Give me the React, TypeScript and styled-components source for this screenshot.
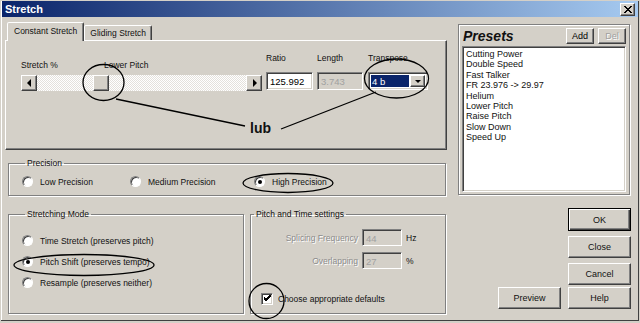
import React from 'react';
import styled, { createGlobalStyle, css } from 'styled-components';

const GlobalStyle = createGlobalStyle`
  html, body {
    margin: 0;
    padding: 0;
    background: #d4d0c8;
  }
  * {
    box-sizing: border-box;
  }
`;

const raised = css`
  border: 1px solid;
  border-color: #fff #404040 #404040 #fff;
  box-shadow: inset -1px -1px #808080, inset 1px 1px #d4d0c8;
  background: #d4d0c8;
`;

const sunken = css`
  border: 1px solid;
  border-color: #808080 #fff #fff #808080;
  box-shadow: inset 1px 1px #404040, inset -1px -1px #d4d0c8;
`;

const etched = css`
  border: 1px solid #808080;
  box-shadow: inset 1px 1px #fff, 1px 1px #fff;
`;

const Window = styled.div`
  position: relative;
  width: 640px;
  height: 322px;
  background: #d4d0c8;
  border: 1px solid #d4d0c8;
  box-shadow: inset -1px -1px #404040, inset 1px 1px #fff;
  font-family: 'Liberation Sans', Arial, sans-serif;
  font-size: 8.5px;
  color: #111;
  overflow: hidden;
`;

const TitleBar = styled.div`
  height: 16px;
  margin: 0 1px;
  padding: 0 3px 0 3px;
  display: flex;
  align-items: center;
  justify-content: space-between;
  background: linear-gradient(to right, #0a246a, #a6caf0);
  color: #fff;
  font-weight: bold;
  font-size: 11px;
`;

const CloseButton = styled.div`
  ${raised};
  width: 15px;
  height: 13px;
  display: flex;
  align-items: center;
  justify-content: center;
`;

const Body = styled.div`
  display: flex;
  gap: 11px;
  padding: 5px 0 0 4px;
`;

const LeftColumn = styled.div`
  width: 442px;
  display: flex;
  flex-direction: column;
`;

const TabStrip = styled.div`
  display: flex;
  align-items: flex-end;
  height: 18px;
  padding-left: 2px;
`;

const Tab = styled.div<{ $active?: boolean }>`
  position: relative;
  z-index: ${p => (p.$active ? 2 : 1)};
  height: ${p => (p.$active ? '19px' : '15px')};
  margin-bottom: ${p => (p.$active ? '-1px' : '0')};
  padding: ${p => (p.$active ? '3px 6px 0' : '2px 5px 0')};
  border: 1px solid;
  border-bottom: none;
  border-color: #fff #404040 transparent #fff;
  border-radius: 2px 2px 0 0;
  box-shadow: inset -1px 0 #808080;
  background: #d4d0c8;
  white-space: nowrap;
`;

const TabPanel = styled.div`
  position: relative;
  height: 110px;
  border: 1px solid;
  border-color: #fff #404040 #404040 #fff;
  box-shadow: inset -1px -1px #808080;
  padding: 12px 0 0 15px;
`;

const ControlsRow = styled.div`
  display: flex;
  align-items: flex-end;
`;

const ScrollColumn = styled.div`
  width: 241px;
  display: flex;
  flex-direction: column;
  margin-bottom: -1px;
`;

const ScrollLabels = styled.div`
  display: grid;
  grid-template-columns: 83px auto;
`;

const Scrollbar = styled.div`
  margin-top: 5px;
  height: 16px;
  display: flex;
`;

const ArrowButton = styled.div<{ $dir: 'left' | 'right' }>`
  ${raised};
  width: 16px;
  height: 16px;
  display: flex;
  align-items: center;
  justify-content: center;
  &::after {
    content: '';
    border-top: 4px solid transparent;
    border-bottom: 4px solid transparent;
    ${p =>
      p.$dir === 'left'
        ? 'border-right: 4px solid #000; margin-left: -1px;'
        : 'border-left: 4px solid #000; margin-left: 1px;'}
  }
`;

const Track = styled.div`
  flex: 1;
  background: repeating-conic-gradient(#fff 0 25%, #e4e1dc 0 50%) 0 0 / 2px 2px;
  display: flex;
`;

const Thumb = styled.div<{ $offset: number }>`
  ${raised};
  width: 16px;
  height: 16px;
  margin-left: ${p => p.$offset}px;
`;

const FieldColumn = styled.div<{ $gap: number }>`
  display: flex;
  flex-direction: column;
  margin-left: ${p => p.$gap}px;
  gap: 9px;
`;

const TextBox = styled.div<{ $width: number; $height?: number; $disabled?: boolean }>`
  ${sunken};
  width: ${p => p.$width}px;
  height: ${p => p.$height ?? 18}px;
  padding: 3px 0 0 3px;
  background: ${p => (p.$disabled ? '#d4d0c8' : '#fff')};
  color: ${p => (p.$disabled ? '#a0a0a0' : '#000')};
  font-size: 9.5px;
`;

const Combo = styled.div`
  ${sunken};
  width: 60px;
  height: 18px;
  background: #fff;
  display: flex;
  padding: 2px;
  gap: 1px;
`;

const ComboValue = styled.div`
  flex: 1;
  background: #0a246a;
  color: #fff;
  font-size: 9.5px;
  padding: 1px 0 0 1px;
`;

const ComboButton = styled.div`
  ${raised};
  width: 15px;
  display: flex;
  align-items: center;
  justify-content: center;
  &::after {
    content: '';
    border-left: 3px solid transparent;
    border-right: 3px solid transparent;
    border-top: 3px solid #000;
  }
`;

const Callout = styled.span`
  position: absolute;
  left: 244px;
  top: 79px;
  font-size: 14px;
  font-weight: bold;
`;

const Group = styled.fieldset<{ $width: number; $height: number }>`
  ${etched};
  margin: 0;
  width: ${p => p.$width}px;
  height: ${p => p.$height}px;
  padding: 0;
  min-width: 0;
`;

const Legend = styled.legend`
  padding: 0 2px;
  margin-left: 3px;
  line-height: 10px;
`;

const PrecisionGroup = styled(Group)`
  margin: 8px 0 0 3px;
  padding: 8px 0 0 13px;
`;

const RadioRow = styled.div`
  display: grid;
  grid-template-columns: 108px 124px auto;
`;

const OptionLabel = styled.label`
  display: flex;
  align-items: center;
  gap: 7px;
  height: 11px;
  white-space: nowrap;
`;

const RadioDot = styled.span<{ $checked?: boolean }>`
  position: relative;
  width: 11px;
  height: 11px;
  border-radius: 50%;
  background: #fff;
  border: 1px solid;
  border-color: #808080 #fff #fff #808080;
  box-shadow: inset 1px 1px #404040;
  flex: none;
  &::after {
    content: '';
    display: ${p => (p.$checked ? 'block' : 'none')};
    position: absolute;
    left: 3px;
    top: 3px;
    width: 4px;
    height: 4px;
    border-radius: 50%;
    background: #000;
  }
`;

const CheckBox = styled.span`
  ${sunken};
  width: 12px;
  height: 12px;
  background: #fff;
  display: flex;
  align-items: center;
  justify-content: center;
  flex: none;
`;

const BottomRow = styled.div`
  display: flex;
  gap: 6px;
  margin: 13px 0 0 3px;
`;

const ModeGroup = styled(Group)`
  padding: 16px 0 0 13px;
`;

const ModeList = styled.div`
  display: flex;
  flex-direction: column;
  gap: 10px;
`;

const SettingsGroup = styled(Group)`
  padding: 10px 0 0 0;
`;

const SettingsGrid = styled.div`
  display: grid;
  grid-template-columns: 107px 40px auto;
  column-gap: 4px;
  row-gap: 6px;
  align-items: center;
`;

const DisabledLabel = styled.span<{ $right?: boolean }>`
  color: #8c8c8c;
  text-shadow: 1px 1px #fff;
  text-align: ${p => (p.$right ? 'right' : 'left')};
  white-space: nowrap;
`;

const CheckRow = styled(OptionLabel)`
  margin: 24px 0 0 10px;
  gap: 5px;
`;

const RightColumn = styled.div`
  width: 173px;
  display: flex;
  flex-direction: column;
`;

const PresetsBox = styled.div`
  ${etched};
  width: 172px;
  height: 171px;
  margin-top: 2px;
  padding: 3px 3px 0 3px;
  display: flex;
  flex-direction: column;
`;

const PresetsHeader = styled.div`
  display: flex;
  align-items: center;
  gap: 4px;
  height: 16px;
  margin-bottom: 2px;
`;

const PresetsTitle = styled.div`
  flex: 1;
  font-size: 14px;
  font-weight: bold;
  font-style: italic;
  padding-left: 1px;
`;

const SmallButton = styled.div<{ $disabled?: boolean }>`
  ${raised};
  width: 28px;
  height: 16px;
  display: flex;
  align-items: center;
  justify-content: center;
  font-size: 9px;
  color: ${p => (p.$disabled ? '#a0a0a0' : '#000')};
  text-shadow: ${p => (p.$disabled ? '1px 1px #fff' : 'none')};
`;

const PresetList = styled.div`
  ${sunken};
  height: 146px;
  background: #fff;
  padding: 2px 3px;
  font-size: 9px;
  line-height: 10.4px;
`;

const ButtonStack = styled.div`
  display: flex;
  flex-direction: column;
  align-items: flex-end;
  margin-top: 13px;
  gap: 5px;
`;

const ButtonRow = styled.div`
  display: flex;
  justify-content: flex-end;
  gap: 7px;
  margin-top: 2px;
`;

const PushButton = styled.div<{ $default?: boolean }>`
  ${raised};
  width: 63px;
  height: ${p => (p.$default ? 23 : 22)}px;
  display: flex;
  align-items: center;
  justify-content: center;
  font-size: 9px;
  ${p =>
    p.$default &&
    css`
      border: 1px solid #000;
      box-shadow: inset 1px 1px #fff, inset -1px -1px #404040, inset -2px -2px #808080;
    `}
`;

const Annotations = styled.svg`
  position: absolute;
  left: 0;
  top: 0;
  pointer-events: none;
`;

const presets = [
  'Cutting Power',
  'Double Speed',
  'Fast Talker',
  'FR 23.976 -> 29.97',
  'Helium',
  'Lower Pitch',
  'Raise Pitch',
  'Slow Down',
  'Speed Up',
];

const Radio: React.FC<{ label: string; checked?: boolean }> = ({ label, checked }) => (
  <OptionLabel>
    <RadioDot $checked={checked} />
    {label}
  </OptionLabel>
);

const App: React.FC = () => {
  return (
    <Window>
      <GlobalStyle />
      <TitleBar>
        Stretch
        <CloseButton>
          <svg width="8" height="7" viewBox="0 0 8 7">
            <path d="M0 0 L7 7 M1 0 L8 7 M7 0 L0 7 M8 0 L1 7" stroke="#000" strokeWidth="1" />
          </svg>
        </CloseButton>
      </TitleBar>
      <Body>
        <LeftColumn>
          <TabStrip>
            <Tab $active>Constant Stretch</Tab>
            <Tab>Gliding Stretch</Tab>
          </TabStrip>
          <TabPanel>
            <ControlsRow>
              <ScrollColumn>
                <ScrollLabels>
                  <span>Stretch %</span>
                  <span>Lower Pitch</span>
                </ScrollLabels>
                <Scrollbar>
                  <ArrowButton $dir="left" />
                  <Track>
                    <Thumb $offset={56} />
                  </Track>
                  <ArrowButton $dir="right" />
                </Scrollbar>
              </ScrollColumn>
              <FieldColumn $gap={4}>
                <span>Ratio</span>
                <TextBox $width={47}>125.992</TextBox>
              </FieldColumn>
              <FieldColumn $gap={4}>
                <span>Length</span>
                <TextBox $width={46} $disabled>
                  3.743
                </TextBox>
              </FieldColumn>
              <FieldColumn $gap={5}>
                <span>Transpose</span>
                <Combo>
                  <ComboValue>4 b</ComboValue>
                  <ComboButton />
                </Combo>
              </FieldColumn>
            </ControlsRow>
            <Callout>lub</Callout>
          </TabPanel>

          <PrecisionGroup $width={438} $height={38}>
            <Legend>Precision</Legend>
            <RadioRow>
              <Radio label="Low Precision" />
              <Radio label="Medium Precision" />
              <Radio label="High Precision" checked />
            </RadioRow>
          </PrecisionGroup>

          <BottomRow>
            <ModeGroup $width={236} $height={105}>
              <Legend>Stretching Mode</Legend>
              <ModeList>
                <Radio label="Time Stretch (preserves pitch)" />
                <Radio label="Pitch Shift (preserves tempo)" checked />
                <Radio label="Resample (preserves neither)" />
              </ModeList>
            </ModeGroup>
            <SettingsGroup $width={196} $height={105}>
              <Legend>Pitch and Time settings</Legend>
              <SettingsGrid>
                <DisabledLabel $right>Splicing Frequency</DisabledLabel>
                <TextBox $width={40} $height={17} $disabled>
                  44
                </TextBox>
                <span>Hz</span>
                <DisabledLabel $right>Overlapping</DisabledLabel>
                <TextBox $width={40} $height={17} $disabled>
                  27
                </TextBox>
                <span>%</span>
              </SettingsGrid>
              <CheckRow>
                <CheckBox>
                  <svg width="7" height="7" viewBox="0 0 7 7">
                    <path d="M0 3 L2 5 L7 0 M0 4 L2 6 L7 1 M0 2 L2 4 L7 -1" stroke="#000" strokeWidth="1" fill="none" />
                  </svg>
                </CheckBox>
                Choose appropriate defaults
              </CheckRow>
            </SettingsGroup>
          </BottomRow>
        </LeftColumn>

        <RightColumn>
          <PresetsBox>
            <PresetsHeader>
              <PresetsTitle>Presets</PresetsTitle>
              <SmallButton>Add</SmallButton>
              <SmallButton $disabled>Del</SmallButton>
            </PresetsHeader>
            <PresetList>
              {presets.map(name => (
                <div key={name}>{name}</div>
              ))}
            </PresetList>
          </PresetsBox>
          <ButtonStack>
            <PushButton $default>OK</PushButton>
            <PushButton>Close</PushButton>
            <PushButton>Cancel</PushButton>
          </ButtonStack>
          <ButtonRow>
            <PushButton>Preview</PushButton>
            <PushButton>Help</PushButton>
          </ButtonRow>
        </RightColumn>
      </Body>

      <Annotations width="640" height="323" viewBox="0 0 640 323" fill="none" stroke="#000" strokeWidth="1.3">
        <ellipse cx="102.5" cy="81.5" rx="20.5" ry="18" />
        <path d="M115 98 L244 125" />
        <path d="M280 128 L375 91" />
        <ellipse cx="395.5" cy="77.5" rx="32" ry="19.5" />
        <ellipse cx="287" cy="182" rx="45" ry="9.5" />
        <ellipse cx="83" cy="264" rx="70" ry="10.5" />
        <circle cx="265.5" cy="300" r="17.5" />
      </Annotations>
    </Window>
  );
};

export default App;
